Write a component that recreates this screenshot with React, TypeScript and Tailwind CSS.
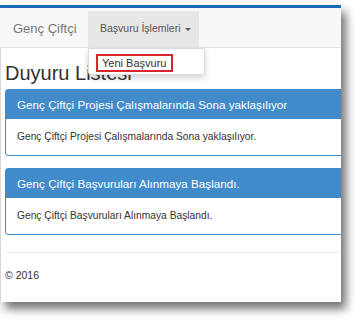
import React from "react";

export default function App() {
  return (
    <div className="w-[355px] h-[321px] bg-white relative overflow-hidden" style={{ fontFamily: '"Liberation Sans", Arial, sans-serif' }}>
      <div className="mt-[5px] w-[341px] h-[297px] bg-white shadow-[5px_7px_9px_rgba(0,0,0,0.55)] relative overflow-hidden">
        <div className="h-[3px] bg-[#1b6bb6]" />
        {/* navbar */}
        <div className="h-[40px] bg-[#f8f8f8] border-b border-[#e7e7e7] flex items-end">
          <div className="h-[36px] flex items-center pl-[13px] w-[88px] text-[13px] text-[#777]">Genç Çiftçi</div>
          <div className="h-[36px] w-[111px] bg-[#e7e7e7] flex items-center pl-[12px] text-[10.5px] text-[#555] gap-[4px]">
            <span>Başvuru İşlemleri</span>
            <span className="w-0 h-0 border-l-[3px] border-r-[3px] border-t-[3px] border-l-transparent border-r-transparent border-t-[#555] mt-[1px]" />
          </div>
        </div>
        {/* content */}
        <div className="border-l border-[#d8d8d8] h-full pl-[4px]">
          <h2 className="text-[20px] text-[#333] leading-none pt-[15px] pb-[6px]">Duyuru Listesi</h2>
          <div className="w-[360px] border border-[#428bca] rounded-[3px] mb-[12px]">
            <div className="h-[29px] bg-[#428bca] flex items-center pl-[11px] text-[11.7px] text-white">Genç Çiftçi Projesi Çalışmalarında Sona yaklaşılıyor</div>
            <div className="h-[36px] flex items-center pl-[11px] text-[10.25px] text-[#333]">Genç Çiftçi Projesi Çalışmalarında Sona yaklaşılıyor.</div>
          </div>
          <div className="w-[360px] border border-[#428bca] rounded-[3px]">
            <div className="h-[29px] bg-[#428bca] flex items-center pl-[11px] text-[11.7px] text-white">Genç Çiftçi Başvuruları Alınmaya Başlandı.</div>
            <div className="h-[36px] flex items-center pl-[11px] text-[10.25px] text-[#333]">Genç Çiftçi Başvuruları Alınmaya Başlandı.</div>
          </div>
          <div className="border-t border-[#eee] mt-[17px] pt-[15px] text-[10.5px] text-[#333]">© 2016</div>
        </div>
        {/* dropdown */}
        <div className="absolute left-[88px] top-[43px] w-[117px] h-[27px] bg-white border border-[#ddd] shadow-[0_3px_6px_rgba(0,0,0,0.18)] rounded-b-[3px]">
          <div className="absolute left-[7px] top-[5px] w-[77px] h-[18px] border-2 border-[#d6262c] flex items-center pl-[4px] text-[11px] text-[#333]">Yeni Başvuru</div>
        </div>
      </div>
    </div>
  );
}
